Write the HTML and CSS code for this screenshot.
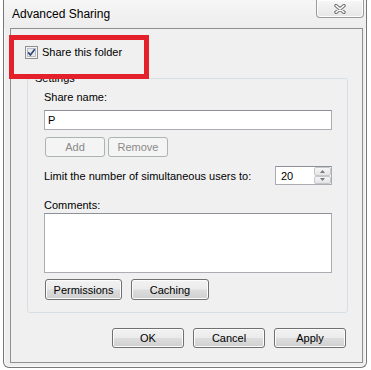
FILE: index.html
```html
<!DOCTYPE html>
<html lang="en">
<head>
  <meta charset="UTF-8">
  <meta name="viewport" content="width=device-width, initial-scale=1.0">
  <title>Advanced Sharing</title>
  <link rel="stylesheet" href="styles.css">
</head>
<body>

  <div class="window">
    <div class="titlebar">
      <span class="title">Advanced Sharing</span>
      <button type="button" class="close-btn" aria-label="Close">
        <svg width="12" height="10" viewBox="0 0 12 10">
          <path d="M2 1.6 L10 8.4 M10 1.6 L2 8.4" stroke="#707070" stroke-width="3.4" stroke-linecap="round"/>
          <path d="M2 1.6 L10 8.4 M10 1.6 L2 8.4" stroke="#fbfbfb" stroke-width="1.4" stroke-linecap="round"/>
        </svg>
      </button>
    </div>

    <div class="client">
      <label class="share-check">
        <span class="check-box">
          <svg width="13" height="13" viewBox="0 0 13 13">
            <rect x="0.5" y="0.5" width="12" height="12" fill="#f4f4f4" stroke="#8e8f8f"/>
            <rect x="2.5" y="2.5" width="8" height="8" fill="#e6e9ee" stroke="#b8bcc4"/>
            <path d="M3.2 6.4 L5.4 9 L9.8 3.2" fill="none" stroke="#31477a" stroke-width="1.7"/>
          </svg>
        </span>
        Share this folder
      </label>

      <fieldset class="settings">
        <legend>Settings</legend>
        <div class="settings-body">
          <label class="field-label" for="shareName">Share name:</label>
          <input type="text" id="shareName" class="text-input" value="P">

          <div class="btn-row small-gap">
            <button type="button" class="btn btn-add" disabled>Add</button>
            <button type="button" class="btn btn-add" disabled>Remove</button>
          </div>

          <div class="limit-row">
            <label for="userLimit">Limit the number of simultaneous users to:</label>
            <div class="spin">
              <input type="text" id="userLimit" class="spin-input" value="20">
              <div class="spin-btns">
                <span class="spin-btn">
                  <svg width="5" height="3" viewBox="0 0 5 3"><path d="M0 3 L2.5 0 L5 3 Z" fill="#7a7a7a"/></svg>
                </span>
                <span class="spin-btn">
                  <svg width="5" height="3" viewBox="0 0 5 3"><path d="M0 0 L2.5 3 L5 0 Z" fill="#7a7a7a"/></svg>
                </span>
              </div>
            </div>
          </div>

          <label class="field-label comments-label" for="comments">Comments:</label>
          <textarea id="comments" class="comments"></textarea>

          <div class="btn-row">
            <button type="button" class="btn btn-perm">Permissions</button>
            <button type="button" class="btn btn-cache">Caching</button>
          </div>
        </div>
      </fieldset>

      <div class="dialog-buttons">
        <button type="button" class="btn btn-dialog">OK</button>
        <button type="button" class="btn btn-dialog">Cancel</button>
        <button type="button" class="btn btn-dialog">Apply</button>
      </div>
    </div>
  </div>

  <!-- annotation box drawn over the screenshot -->
  <div class="highlight"></div>

</body>
</html>
```

FILE: styles.css
```css
body {
  margin: 0;
  background: #fff;
  font-family: "Liberation Sans", Arial, sans-serif;
  font-size: 11px;
  color: #000;
}

.window {
  box-sizing: border-box;
  width: 364px;
  margin-left: 3px;
  background: #eeeeee;
  border: 1px solid #777;
  border-top: none;
  border-radius: 0 0 6px 6px;
  box-shadow: inset 1px 0 0 #fafafa, inset -1px 0 0 #fafafa, inset 0 -1px 0 #fafafa;
  padding-bottom: 4px;
}

.titlebar {
  display: flex;
  align-items: flex-start;
  height: 28px;
  background: linear-gradient(#f6f6f6, #ededed);
}

.title {
  margin: 7px 0 0 8px;
  font-size: 12px;
  line-height: 15px;
}

.close-btn {
  display: flex;
  align-items: center;
  justify-content: center;
  box-sizing: border-box;
  width: 48px;
  height: 18px;
  margin: 0 2px 0 auto;
  padding: 0;
  border: 1px solid #9a9a9a;
  border-top: none;
  border-radius: 0 0 4px 4px;
  background: linear-gradient(#f7f7f7, #e6e6e6);
  box-shadow: inset 0 0 0 1px #fdfdfd;
}

.client {
  margin: 0 3px 0 6px;
  padding: 17px 0 14px 0;
  background: #f0f0f0;
  border: 1px solid #8f8f8f;
}

.share-check {
  display: flex;
  align-items: center;
  margin-left: 14px;
  line-height: 13px;
  height: 13px;
}

.check-box {
  display: block;
  width: 13px;
  height: 13px;
  margin-right: 4px;
}

.check-box svg {
  display: block;
}

.settings {
  margin: 13px 14px 0 16px;
  padding: 0 0 12px 0;
  border: 1px solid #d5dfe5;
  border-radius: 3px;
  min-width: 0;
}

.settings legend {
  margin-left: 5px;
  padding: 0 2px;
  line-height: 13px;
}

.settings-body {
  padding: 6px 15px 0 16px;
}

.field-label {
  display: block;
  line-height: 13px;
}

.text-input {
  display: block;
  box-sizing: border-box;
  width: 100%;
  height: 20px;
  margin-top: 6px;
  padding: 0 3px;
  font: inherit;
  border: 1px solid #abadb3;
  border-top-color: #8d9096;
  background: #fff;
  outline: none;
}

.btn-row {
  display: flex;
  gap: 9px;
  margin: 6px 0 0 1px;
}

.btn-row.small-gap {
  gap: 3px;
  margin-top: 7px;
}

.btn {
  box-sizing: border-box;
  height: 20px;
  padding: 0;
  font: inherit;
  color: #000;
  border: 1px solid #707070;
  border-radius: 3px;
  background: linear-gradient(#f2f2f2 0%, #ebebeb 48%, #dddddd 52%, #cfcfcf 100%);
  box-shadow: inset 0 0 0 1px #fcfcfc;
}

.btn:disabled {
  color: #8a8a8a;
  border-color: #adb2b5;
  background: #f4f4f4;
  box-shadow: none;
}

.btn-add {
  width: 60px;
}

.btn-perm {
  width: 77px;
  height: 21px;
}

.btn-cache {
  width: 78px;
  height: 21px;
}

.limit-row {
  display: flex;
  align-items: center;
  justify-content: space-between;
  margin-top: 9px;
  height: 19px;
}

.spin {
  display: flex;
  box-sizing: border-box;
  width: 57px;
  height: 19px;
  border: 1px solid #abadb3;
  border-top-color: #8d9096;
  background: #fff;
}

.spin-input {
  width: 0;
  flex: 1;
  padding: 0 0 0 5px;
  border: none;
  font: inherit;
  background: transparent;
  outline: none;
}

.spin-btns {
  display: flex;
  flex-direction: column;
  width: 17px;
}

.spin-btn {
  flex: 1;
  display: flex;
  align-items: center;
  justify-content: center;
  border: 1px solid #c4c7cc;
  border-radius: 2px;
  background: linear-gradient(#f6f6f6, #e4e4e4);
}

.spin-btn svg {
  display: block;
}

.comments-label {
  margin-top: 14px;
}

.comments {
  display: block;
  box-sizing: border-box;
  width: 100%;
  height: 60px;
  margin-top: 1px;
  border: 1px solid #abadb3;
  border-top-color: #8d9096;
  background: #fff;
  resize: none;
  font: inherit;
  outline: none;
}

.dialog-buttons {
  display: flex;
  justify-content: flex-end;
  gap: 9px;
  margin-top: 15px;
  padding-right: 16px;
}

.btn-dialog {
  width: 72px;
}

.highlight {
  position: absolute;
  left: 9px;
  top: 35px;
  box-sizing: border-box;
  width: 140px;
  height: 44px;
  border: 5px solid #e4202b;
}
```
